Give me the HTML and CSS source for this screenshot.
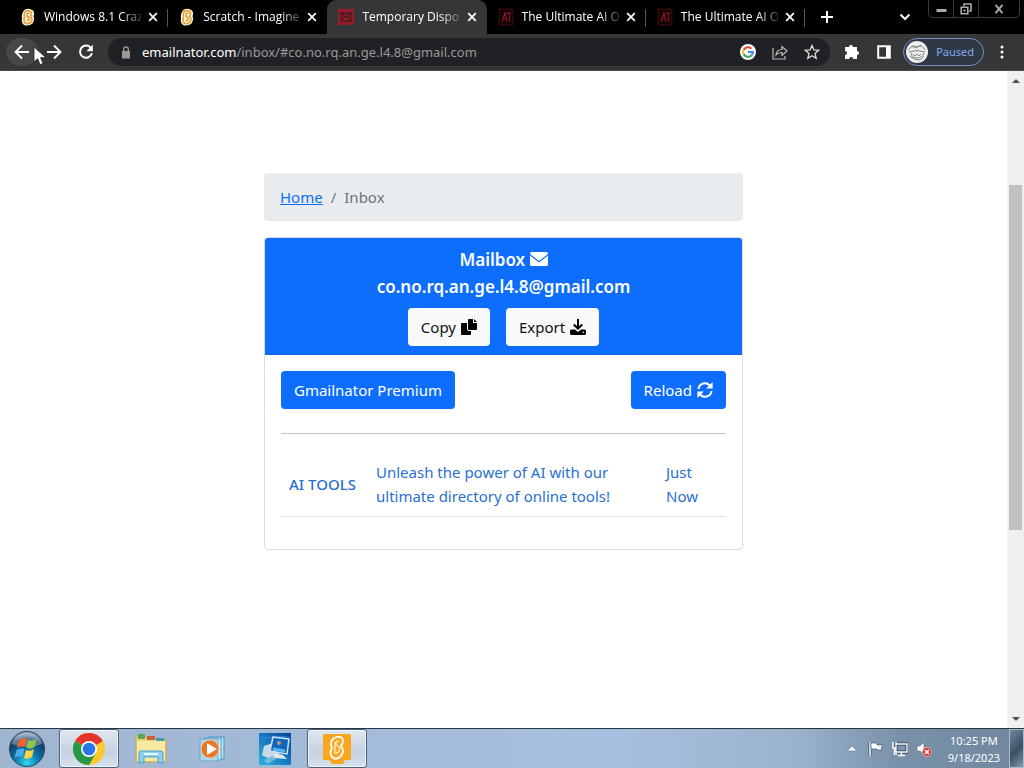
FILE: index.html
```html
<!DOCTYPE html>
<html lang="en">
<head>
<meta charset="utf-8">
<title>Temporary Disposable Gmail</title>
<link rel="stylesheet" href="styles.css">
</head>
<body>
<svg class="defs" aria-hidden="true">
  <symbol id="scratch" viewBox="0 0 14 18">
    <path d="M4 1.5Q8-.5 12 2.5Q14 5 12.500 8Q14 12 11.500 15.500Q8 18.500 3 17Q0 15 1 11Q0 5 4 1.500Z" fill="#fff4d8"/>
    <path d="M5 3Q10 2 10.500 5Q10.500 7 9.500 8.500Q12 11 10 14Q6 17 3.500 14.500Q2.500 12 3.500 8.500Q2.500 5 5 3Z" fill="none" stroke="#e7a546" stroke-width="1.800"/>
    <path d="M8.500 5.500Q6 4.500 6 7T8 9.500Q9 12.500 5.500 12.500" fill="none" stroke="#d99a3e" stroke-width="1.400"/>
  </symbol>
  <symbol id="ait" viewBox="0 0 14 16">
    <path d="M1 1h12v14H1z" fill="#160204" stroke="#4d1015" stroke-dasharray="2 1"/>
    <path d="M3.500 12L6 4.500L8 12M4.500 9.500h3M7.500 4.500h4M10 4.500V12" fill="none" stroke="#861b24"/>
  </symbol>
  <symbol id="close" viewBox="0 0 10 10"><path d="M1.200 1.200l7.600 7.600M8.800 1.200L1.200 8.800" stroke="#fff" stroke-width="1.700"/></symbol>
</svg>

<header class="browser">
  <div class="tabstrip">
    <nav class="tabs" aria-label="Tabs">
      <div class="tab"><svg class="favicon"><use href="#scratch"/></svg><span class="tab-title">Windows 8.1 Craz</span><button class="tab-close" aria-label="Close tab"><svg width="10" height="10"><use href="#close"/></svg></button></div>
      <div class="tab"><svg class="favicon"><use href="#scratch"/></svg><span class="tab-title">Scratch - Imagine,</span><button class="tab-close" aria-label="Close tab"><svg width="10" height="10"><use href="#close"/></svg></button></div>
      <div class="tab active"><svg class="favicon" viewBox="0 0 18 18"><path d="M1 1h16v16H1z" fill="#971c27"/><path d="M4 5h10v8H4zM4 5l5 4 5-4M4 13l3.500-5M14 13l-3.500-5" fill="none" stroke="#4b1a20" stroke-width="1.300"/></svg><span class="tab-title">Temporary Dispos</span><button class="tab-close" aria-label="Close tab"><svg width="10" height="10"><use href="#close"/></svg></button></div>
      <div class="tab"><svg class="favicon"><use href="#ait"/></svg><span class="tab-title">The Ultimate AI O</span><button class="tab-close" aria-label="Close tab"><svg width="10" height="10"><use href="#close"/></svg></button></div>
      <div class="tab"><svg class="favicon"><use href="#ait"/></svg><span class="tab-title">The Ultimate AI O</span><button class="tab-close" aria-label="Close tab"><svg width="10" height="10"><use href="#close"/></svg></button></div>
    </nav>
    <button class="new-tab" aria-label="New tab"><svg width="12" height="12" viewBox="0 0 12 12"><path d="M6 0v12M0 6h12" stroke="#fff" stroke-width="2"/></svg></button>
    <button class="tab-search" aria-label="Search tabs"><svg width="12" height="8" viewBox="0 0 12 8"><path d="M1.500 1.500L6 6l4.500-4.500" fill="none" stroke="#fff" stroke-width="2"/></svg></button>
    <div class="window-controls">
      <button aria-label="Minimize"><svg width="11" height="10" viewBox="0 0 11 10"><path d="M.5 6.500h10" stroke="#aaa" stroke-width="3"/></svg></button>
      <button aria-label="Restore"><svg width="12" height="12" viewBox="0 0 12 12"><path d="M4 3V1h7v7H9M1.200 4.200h6.600v6.600H1.200z" fill="none" stroke="#aaa" stroke-width="1.600"/><path d="M3.500 6.500h2v2h-2z" fill="#aaa"/></svg></button>
      <button aria-label="Close"><svg width="10" height="10" viewBox="0 0 10 10"><path d="M1.500.8l7 8.400M8.500.8l-7 8.400" stroke="#aaa" stroke-width="1.900"/></svg></button>
    </div>
  </div>
  <div class="toolbar">
    <div class="nav-buttons">
      <button class="nav-back" aria-label="Back"><svg width="16" height="16" viewBox="0 0 16 16"><path d="M15 8H2M8 1.500L1.500 8 8 14.500" fill="none" stroke="#fff" stroke-width="1.800"/></svg></button>
      <button aria-label="Forward"><svg width="16" height="16" viewBox="0 0 16 16"><path d="M1 8h13M8 1.500L14.500 8 8 14.500" fill="none" stroke="#fff" stroke-width="1.800"/></svg></button>
      <button aria-label="Reload page"><svg width="16" height="16" viewBox="0 0 16 16"><path d="M13.200 4.200A6.100 6.100 0 1 0 14 9.300" fill="none" stroke="#fff" stroke-width="2"/><path d="M14.800.8v6.400H8.400z" fill="#fff"/></svg></button>
      <svg class="cursor" width="14" height="20" viewBox="0 0 14 20" aria-hidden="true"><path d="M1 1v15l3.600-3.300 2.500 6 3-1.300-2.500-5.700H13z" fill="#fff" stroke="#222" stroke-width=".8"/></svg>
    </div>
    <div class="omnibox">
      <svg width="10" height="13" viewBox="0 0 10 13"><path d="M1 5h8v7.500H1z" fill="#999"/><path d="M2.700 5V3Q2.700 1 5 1t2.300 2v2" fill="none" stroke="#999" stroke-width="1.400"/></svg>
      <a class="address" href="#inbox"><span class="host">emailnator.com</span>/inbox/#co.no.rq.an.ge.l4.8@gmail.com</a>
      <button aria-label="Search with Google"><svg width="16" height="16" viewBox="0 0 16 16"><circle cx="8" cy="8" r="8" fill="#fff"/><g fill="none" stroke-width="2"><path d="M11.500 4.600A4.900 4.900 0 0 0 3.700 5.700" stroke="#ea4335"/><path d="M3.700 5.700a4.900 4.900 0 0 0 0 4.600" stroke="#fbbc05"/><path d="M3.700 10.300a4.900 4.900 0 0 0 7.600 1.200" stroke="#34a853"/><path d="M11.300 11.500A4.900 4.900 0 0 0 12.900 8H8" stroke="#4285f4"/></g></svg></button>
      <button aria-label="Share"><svg width="16" height="16" viewBox="0 0 16 16"><path d="M1 4v11h12v-3M4 11Q4.500 5.500 10 5.500V2.500l5 4.500-5 4.500v-3Q6 8.500 4 11z" fill="none" stroke="#bbb" stroke-width="1.200"/></svg></button>
      <button aria-label="Bookmark this tab"><svg width="16" height="16" viewBox="0 0 16 16"><path d="M8 1.500l1.900 4.400 4.800.4L11 9.500l1.200 4.800L8 11.700l-4.200 2.600L5 9.500 1.300 6.300l4.800-.4z" fill="none" stroke="#ddd" stroke-width="1.300"/></svg></button>
    </div>
    <button class="tool" aria-label="Extensions"><svg width="16" height="16" viewBox="0 0 16 16"><path d="M5 3a2 2 0 0 1 4 0h4v4a2 2 0 0 1 0 4v4H9.200a2 2 0 0 0-4 0H1v-4a2 2 0 0 0 0-4V3z" fill="#fff"/></svg></button>
    <button class="tool" aria-label="Side panel"><svg width="14" height="14" viewBox="0 0 14 14"><path d="M1.200 1.200h11.600v11.600H1.200z" fill="none" stroke="#fff" stroke-width="2"/><path d="M9 1h4v12H9z" fill="#fff"/></svg></button>
    <button class="profile"><svg width="22" height="22" viewBox="0 0 22 22"><circle cx="11" cy="11" r="11" fill="#eee"/><path d="M2 9q5-6 9-3 5-3 8 3M3 11q8-3 16 0M5 12q1 5 6 5t7-5M7 13l2 2 2-2 2 2 2-2M6 5l4 2 5-3M4 15l4 3 6 1 4-4" fill="none" stroke="#777" stroke-width=".9"/></svg><span>Paused</span></button>
    <button class="tool menu" aria-label="Menu"><svg width="4" height="14" viewBox="0 0 4 14" fill="#fff"><circle cx="2" cy="2" r="1.500"/><circle cx="2" cy="7" r="1.500"/><circle cx="2" cy="12" r="1.500"/></svg></button>
  </div>
</header>

<div class="viewport">
  <main class="page">
    <div class="container">
      <nav class="breadcrumb" aria-label="Breadcrumb"><a href="#home">Home</a><span>/</span><span>Inbox</span></nav>
      <section class="card">
        <div class="card-header">
          <h1>Mailbox <svg class="envelope" width="18" height="14" viewBox="0 0 18 14"><path d="M1.500 0h15Q18 0 18 1.500V2L9 9 0 2v-.5Q0 0 1.500 0zM0 3.600l9 7 9-7v8.900q0 1.500-1.500 1.500h-15Q0 14 0 12.500z" fill="#fff"/></svg></h1>
          <h2>co.no.rq.an.ge.l4.8@gmail.com</h2>
          <div class="actions">
            <button class="btn light">Copy <svg width="16" height="16" viewBox="0 0 16 16"><path d="M8 0h4v4h4v6q0 1-1 1H8q-1 0-1-1V1q0-1 1-1zM13 0l3 3h-3zM1 4h5v6q0 2 2 2h2v3q0 1-1 1H1q-1 0-1-1V5q0-1 1-1z" fill="#000"/></svg></button>
            <button class="btn light">Export <svg width="16" height="16" viewBox="0 0 16 16"><path d="M8 0v9M3.800 5.500L8 9.700l4.200-4.200" fill="none" stroke="#000" stroke-width="2"/><path d="M1.500 10.500H5l3 2.500 3-2.500h3.500Q16 10.500 16 12v2.500q0 1.500-1.500 1.500h-13Q0 16 0 14.500V12q0-1.500 1.500-1.500z" fill="#000"/><circle cx="13.300" cy="13.300" r=".8" fill="#fff"/></svg></button>
          </div>
        </div>
        <div class="card-body">
          <div class="row"><button class="btn primary">Gmailnator Premium</button><button class="btn primary">Reload <svg width="16" height="16" viewBox="0 0 16 16"><path d="M1.500 7A6.400 6.400 0 0 1 13.300 4.300M14.500 9A6.400 6.400 0 0 1 2.700 11.700" fill="none" stroke="#fff" stroke-width="2"/><path d="M15.600 0v6.400H9.200zM.4 16V9.600h6.400z" fill="#fff"/></svg></button></div>
          <hr>
          <table>
            <tbody><tr><td class="sender"><a href="#ai">AI TOOLS</a></td><td class="subject"><a href="#ai">Unleash the power of AI with our ultimate directory of online tools!</a></td><td class="time"><a href="#ai">Just Now</a></td></tr></tbody>
          </table>
        </div>
      </section>
    </div>
  </main>
  <div class="scrollbar" aria-hidden="true"><svg width="8" height="4" viewBox="0 0 8 4"><path d="M4 0l4 4H0z" fill="#505050"/></svg><div class="track"><div class="thumb"></div></div><svg width="8" height="4" viewBox="0 0 8 4"><path d="M0 0h8L4 4z" fill="#505050"/></svg></div>
</div>

<footer class="taskbar">
  <button class="start" aria-label="Start"><svg width="38" height="38" viewBox="0 0 38 38"><defs><radialGradient id="orb" cx=".5" cy=".9" r=".9"><stop offset="0" stop-color="#35d4ee"/><stop offset=".4" stop-color="#0876a9"/><stop offset=".75" stop-color="#153d65"/><stop offset="1" stop-color="#a9c0d3"/></radialGradient></defs><circle cx="19" cy="19" r="17.500" fill="url(#orb)" stroke="#23435d"/><path d="M4 14Q8 3 19 3t15 11q-14 6-30 0z" fill="#fff" opacity=".3"/><path d="M11 10q4-3 8-1l-2 8q-4-2-8 1z" fill="#ef632d"/><path d="M20.500 10q4 2 8-1l-2 8q-4 3-8 1z" fill="#90c845"/><path d="M8.500 20q4-3 8-1l-2 8q-4-2-8 1z" fill="#4ba9e8"/><path d="M18 20q4 2 8-1l-2 8q-4 3-8 1z" fill="#ffd145"/></svg></button>
  <button class="task open" aria-label="Chrome"><svg width="32" height="32" viewBox="0 0 32 32"><circle cx="16" cy="16" r="16" fill="#fdc82d"/><path d="M16 16L2.140 8A16 16 0 0 1 29.860 8z" fill="#e5352b"/><path d="M2.140 8A16 16 0 0 0 16 32l7-12-7-4z" fill="#279847"/><circle cx="16" cy="16" r="8" fill="#fff"/><circle cx="16" cy="16" r="6.300" fill="#2877e8"/></svg></button>
  <button class="task" aria-label="Explorer"><svg width="32" height="32" viewBox="0 0 32 32"><path d="M1 3h9l2 2h10l1 2h8v22H1z" fill="#eed277" stroke="#c4a650"/><path d="M3 1h7v5H3z" fill="#5ca65a"/><path d="M12 3h8v4h-8z" fill="#c5643b"/><path d="M21 5h8v4h-8z" fill="#3d9bad"/><path d="M2 8h28v20H2z" fill="#fae9a2"/><path d="M4 30V20q0-2 2-2h20q2 0 2 2v10h-5v-6H9v6z" fill="#8bd0f0" stroke="#4b9dcc"/><path d="M9 21h14" stroke="#e4faff" stroke-width="2"/></svg></button>
  <button class="task" aria-label="Media Player"><svg width="28" height="28" viewBox="0 0 28 28"><path d="M9 2h16v22H9z" fill="#b9e1f3" stroke="#4b92bd"/><path d="M5 3h17v22H5z" fill="#d5effa" stroke="#5599c4"/><path d="M1 4h18v22H1z" fill="#a9d9f2" stroke="#67a9cf"/><circle cx="11" cy="14" r="9" fill="#e8752a" stroke="#f8c495"/><path d="M8 8l10 6-10 6z" fill="#fff"/></svg></button>
  <button class="task" aria-label="Display"><svg width="32" height="32" viewBox="0 0 32 32"><defs><linearGradient id="desk" x1="0" y1="1" x2="1" y2="0"><stop stop-color="#29b2e5"/><stop offset="1" stop-color="#063f99"/></linearGradient></defs><path d="M0 0h32v32H0z" fill="url(#desk)"/><path d="M0 7q15-5 32-3M0 3l32 6" stroke="#388be0" fill="none" opacity=".6"/><path d="M5 13l9-3 7 10-11 6-7-4z" fill="#c9d9e6"/><path d="M14 4l16 2-2 15-17-3z" fill="#1165bd" stroke="#cbe5f5" stroke-width="1.500"/><circle cx="20" cy="10" r="2" fill="#d69375"/><path d="M14 16l12 2" stroke="#59b5ed" stroke-width="3"/><path d="M16 20l8 2 4 4-14-1z" fill="#dce6ee"/><path d="M5 27l8-4 4 3-9 5z" fill="#70bddf"/></svg></button>
  <button class="task open" aria-label="Scratch"><svg width="32" height="32" viewBox="0 0 32 32"><path d="M3 1h26q1 0 1 2v24h-6l-2 4H11l-3-4H2V3q0-2 1-2z" fill="#f9a51d"/><path d="M13 5q8-3 9 2 0 4-2 6 4 5 0 10-5 5-9 1-3-4 0-9-3-6 2-10z" fill="none" stroke="#fff" stroke-width="1.800"/><path d="M18 9q-3-2-3 1 0 2 2 3 3 2 1 5-1 2-3 2M14 9v12" fill="none" stroke="#fff3db" stroke-width="1.300"/></svg></button>
  <div class="tray">
    <button aria-label="Show hidden icons"><svg width="10" height="6" viewBox="0 0 10 6"><path d="M5 0l5 5H0z" fill="#fff" stroke="#637c93" stroke-width=".7"/></svg></button>
    <button aria-label="Action Center"><svg width="16" height="16" viewBox="0 0 16 16"><path d="M2 1v14" stroke="#334c63" stroke-width="3"/><path d="M2 1v14" stroke="#fff" stroke-width="1.500"/><path d="M3 2h6v2h6l-2 3 1 2H9V8H3z" fill="#fff" stroke="#40586e" stroke-width=".7"/></svg></button>
    <button aria-label="Network"><svg width="16" height="16" viewBox="0 0 16 16"><path d="M4 3h11v8H4z" fill="#7d94ad" stroke="#26394b" stroke-width="3"/><path d="M4 3h11v8H4zM9.500 11v3M6 14.500h7M1 3v4h3M2.500 7v6H5M1 1v2M4 1v2" fill="none" stroke="#fff" stroke-width="1.400"/></svg></button>
    <button aria-label="Volume muted"><svg width="16" height="16" viewBox="0 0 16 16"><path d="M1 5h3l4-4v13l-4-4H1z" fill="#fff" stroke="#6b7785" stroke-width=".7"/><circle cx="11" cy="11" r="4.500" fill="#d43535" stroke="#eaa"/><path d="M9 9l4 4M13 9l-4 4" stroke="#fff" stroke-width="1.600"/></svg></button>
    <div class="clock"><time>10:25 PM</time><time>9/18/2023</time></div>
    <button class="show-desktop" aria-label="Show desktop"></button>
  </div>
</footer>
</body>
</html>
```

FILE: styles.css
```css
* { box-sizing: border-box; }
body { margin: 0; height: 100vh; display: flex; flex-direction: column; overflow: hidden; font: 16px/24px "Noto Sans", sans-serif; background: #fff; color: #212529; }
button { margin: 0; padding: 0; border: 0; background: none; font: inherit; color: inherit; display: inline-flex; align-items: center; justify-content: center; }
svg { flex: none; }
.defs { position: absolute; width: 0; height: 0; }

.browser { flex: none; font-size: 12px; color: #fff; background: #000; }
.tabstrip { display: flex; height: 34px; padding-left: 9px; }
.tabs { display: flex; flex: 0 1 796px; min-width: 0; }
.tab { position: relative; flex: 1; min-width: 0; display: flex; align-items: center; padding: 0 10px; }
.tab::after { content: ""; position: absolute; right: 0; top: 9px; height: 18px; border-right: 1px solid #555; }
.tab.active { background: #353637; border-radius: 9px 9px 0 0; }
.tab.active::after, .tab:nth-child(2)::after { display: none; }
.favicon { width: 18px; height: 18px; }
.tab-title { flex: 1; margin-left: 7px; overflow: hidden; white-space: nowrap; font-family: "Open Sans", sans-serif; mask-image: linear-gradient(to right, #000 80%, rgba(0, 0, 0, .2)); }
.tab-close { margin-left: 7px; width: 10px; height: 20px; }
.new-tab { width: 44px; }
.tab-search { width: 24px; margin-left: auto; }
.window-controls { display: flex; height: 18px; margin: 0 4px 0 11px; border: 1px solid #3a3a3a; border-top: 0; border-radius: 0 0 5px 5px; }
.window-controls button { width: 25px; border-right: 1px solid #3a3a3a; }
.window-controls button:last-child { width: 40px; border: 0; }
.toolbar { display: flex; align-items: center; height: 37px; background: #353637; border-bottom: 1px solid #4a4a4a; padding-right: 11px; }
.nav-buttons { position: relative; display: flex; padding-left: 6px; margin-right: 6px; }
.nav-buttons button { width: 32px; height: 28px; }
.nav-buttons .nav-back { background: #474747; border-radius: 14px; }
.cursor { position: absolute; left: 33px; top: 8px; }
.omnibox { flex: 1; min-width: 0; display: flex; align-items: center; height: 28px; padding: 0 10px 0 13px; margin-right: 14px; background: #202124; border-radius: 14px; }
.address { flex: 1; min-width: 0; margin-left: 11px; overflow: hidden; white-space: nowrap; font-size: 13px; color: #999; text-decoration: none; }
.host { color: #fff; }
.omnibox button { width: 16px; margin-left: 16px; }
.tool { width: 16px; margin-right: 16px; }
.profile { height: 28px; gap: 8px; padding: 0 9px 0 2px; margin-left: -5px; border: 1px solid #7890c5; border-radius: 14px; background: #303846; color: #80a9f0; font-size: 11px; }
.tool.menu { width: 4px; margin: 0 9px 0 16px; }

.viewport { flex: 1; min-height: 0; display: flex; }
.page { flex: 1; min-width: 0; overflow: hidden; padding: 102px 16px 0; }
.container { max-width: 479px; margin: 0 auto; }
.breadcrumb { display: flex; gap: 8px; padding: 12px 16px; margin-bottom: 16px; background: #e9ecef; border-radius: 4px; font-size: 15px; color: #6c757d; }
a { color: #0d6efd; }
.card { border: 1px solid #dcdcdc; border-radius: 4px; overflow: hidden; font-size: 15px; }
.card-header { padding: 8px 16px; background: #0d6efd; border-bottom: 1px solid #0b67ee; color: #fff; text-align: center; }
.card-header h1, .card-header h2 { margin: 0; font-size: 17px; line-height: 27px; font-weight: 600; }
.actions { display: flex; justify-content: center; gap: 16px; margin-top: 8px; }
.btn { height: 38px; padding: 0 13px; gap: 5px; border-radius: 4px; }
.btn.light { background: #f8f9fa; color: #111; }
.btn.primary { background: #0d6efd; color: #fff; }
.card-body { padding: 16px 16px 32px; }
.row { display: flex; justify-content: space-between; }
hr { margin: 24px 0 18px; border: 0; border-top: 1px solid #c4c5c7; }
table { width: 100%; border-collapse: collapse; }
td { padding: 8px; border-bottom: 1px solid #dee2e6; vertical-align: middle; }
td a { text-decoration: none; color: #286fd3; }
.sender { width: 87px; white-space: nowrap; font-weight: 500; }
.time { width: 68px; }
.subject { padding-right: 40px; }
.scrollbar { width: 17px; display: flex; flex-direction: column; align-items: center; padding: 8px 2px 7px; background: #f0f0f0; }
.track { flex: 1; width: 100%; padding: 102px 0 187px; display: flex; }
.thumb { flex: 1; background: #c1c1c1; }

.taskbar { flex: none; display: flex; align-items: stretch; height: 40px; border-top: 1px solid #263645; background: linear-gradient(to right, #9fb5d0, #a8c0df 60%, #9bb2cc 78%, #7890a9 88%, #70879e); }
.start { width: 54px; margin-right: 5px; }
.task { width: 60px; margin-right: 2px; border: 1px solid transparent; border-radius: 3px; }
.task.open { background: linear-gradient(#e1e7ef, #c4d1e2 60%, #d8e2ed); border-color: #4c6278; box-shadow: inset 0 0 0 1px #edf4fa; }
.tray { display: flex; align-items: center; margin-left: auto; color: #fff; font-size: 11px; line-height: 17px; }
.tray > button { width: 16px; margin-right: 8px; }
.clock { display: flex; flex-direction: column; align-items: center; margin: 0 9px 0 8px; }
.tray .show-desktop { width: 15px; height: 39px; margin: 0; border: 1px solid #a8bacb; background: linear-gradient(135deg, #71879d, #3c5063 55%, #8397aa); }
```
